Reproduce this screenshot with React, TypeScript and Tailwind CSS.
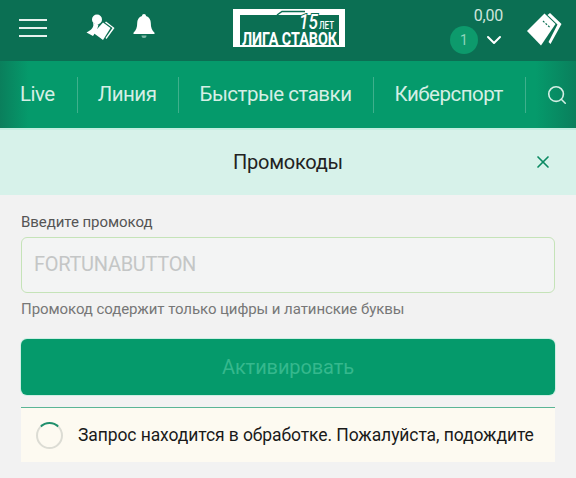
import { X, Search, ChevronDown } from 'lucide-react';

const NAV_ITEMS = ['Live', 'Линия', 'Быстрые ставки', 'Киберспорт'];

function Logo() {
  return (
    <svg width="112" height="38" viewBox="0 0 112 38" className="shrink-0 overflow-visible">
      <rect width="112" height="38" fill="#fff" />
      <path d="M7 6H106V36H7Z" fill="#0b6f53" />
      <path d="M44 6 49 2.500H72" fill="none" stroke="#0b6f53" strokeWidth="1.500" />
      <path d="M86 0H112V4H106V6H86Z" fill="#fff" />
      <text x="66" y="20" fontFamily="Roboto, sans-serif" fontStyle="italic" fontWeight="500" fontSize="21" fill="#fff" stroke="#0b6f53" strokeWidth="2" paintOrder="stroke" textLength="19" lengthAdjust="spacingAndGlyphs">15</text>
      <text x="86" y="20" fontFamily="Roboto, sans-serif" fontWeight="500" fontSize="11" fill="#fff" textLength="15" lengthAdjust="spacingAndGlyphs">ЛЕТ</text>
      <text x="9" y="36" fontFamily="Roboto, sans-serif" fontWeight="700" fontSize="18" fill="#fff" textLength="95" lengthAdjust="spacingAndGlyphs">ЛИГА СТАВОК</text>
    </svg>
  );
}

function CouponIcon() {
  return (
    <svg width="36" height="34" viewBox="0 0 36 34" className="shrink-0">
      <path d="M24 1 35.500 12 24.500 32 22.500 30 31.500 12.500 21.500 3Z" fill="#fff" />
      <path d="M18.500 1.500 29.500 12 15 33.500 1 19Z" fill="#fff" />
      <path d="M17 9 24.500 16" stroke="#0b6f53" strokeWidth="1.200" strokeDasharray="2 1.500" />
    </svg>
  );
}

function PromoIcon() {
  return (
    <svg width="30" height="30" viewBox="0 0 30 30" className="shrink-0">
      <circle cx="12" cy="6.500" r="5" fill="#fff" />
      <path d="M8 10c1.500 4-1.500 7-6.500 9.500L8 23l4-6 1.500-5.500Z" fill="#fff" />
      <path d="M18 9.500 25.500 15 18 27 8.500 20Z" fill="#fff" />
      <path d="M21 8.500 29.500 15 21.500 26 20.500 25 27.500 15 20 9.500Z" fill="#fff" />
    </svg>
  );
}

function BellIcon() {
  return (
    <svg width="22" height="26" viewBox="0 0 22 26" className="shrink-0">
      <path d="M11 0c1.200 0 2 .9 2 2.100 3.300 1 4.800 3.700 4.800 7 0 4.500 1 7.200 3.700 9.600v1.300H.5v-1.300c2.700-2.400 3.700-5.100 3.700-9.600 0-3.300 1.500-6 4.800-7C9 .9 9.800 0 11 0Z" fill="#fff" />
      <path d="M8.500 21.500h5a2.500 2.500 0 0 1-5 0Z" fill="#7fb8a6" />
    </svg>
  );
}

export default function App() {
  return (
    <div className="w-[576px] h-[478px] overflow-hidden bg-[#f2f2f2] font-['Roboto',sans-serif]">
      {/* Header */}
      <header className="h-[61px] flex items-center bg-[#0b6f53] pl-[19px] pr-[14px]">
        <div className="w-[28px] flex flex-col gap-[6px] mb-[5px]">
          <span className="h-[2px] bg-[#e6f2ee]" />
          <span className="h-[2px] bg-[#e6f2ee]" />
          <span className="h-[2px] bg-[#e6f2ee]" />
        </div>
        <div className="ml-[38px] mb-[5px]">
          <PromoIcon />
        </div>
        <div className="ml-[18px] mb-[8px]">
          <BellIcon />
        </div>
        <div className="ml-[78px] mb-[5px]">
          <Logo />
        </div>
        <div className="ml-auto flex flex-col items-end mr-[21px]">
          <span className="text-[16px] leading-[18px] text-[#cfe5dd] mr-[2px] tracking-[-0.2px]">0,00</span>
          <div className="flex items-center gap-[4px] mt-[1px] -mr-[1px]">
            <span className="w-[28px] h-[28px] rounded-full bg-[#0d9a6c] flex items-center justify-center text-[14px] text-[#8fd5bb]">1</span>
            <ChevronDown size={24} color="#fff" strokeWidth={2} />
          </div>
        </div>
        <div className="mb-[3px]">
          <CouponIcon />
        </div>
      </header>

      {/* Nav */}
      <nav className="h-[67px] flex items-center pl-[20px] bg-[linear-gradient(90deg,#0a7f5c_0%,#059a6b_5%,#059a6b_93%,#0a7f5c_100%)]">
        {NAV_ITEMS.map((item) => (
          <div key={item} className="flex items-center">
            <span className="text-[20.500px] tracking-[-0.5px] text-[#d5efe5] whitespace-nowrap">{item}</span>
            <span className="w-px h-[36px] bg-[#3fb08c] ml-[22px] mr-[20px]" />
          </div>
        ))}
        <Search size={22} color="#d5efe5" strokeWidth={1.75} />
      </nav>
      <div className="h-[2px] bg-[#c2eee0]" />

      {/* Title */}
      <div className="h-[65px] flex items-center justify-center relative bg-[#d7f2ea]">
        <span className="text-[20px] tracking-[-0.25px] text-[#222] mb-[2px]">Промокоды</span>
        <X size={20} color="#0b8a62" strokeWidth={2} className="absolute right-[23px] top-[22px]" />
      </div>

      {/* Form */}
      <div className="px-[21px] pt-[17px]">
        <label className="block text-[15px] tracking-[-0.05px] leading-[20px] text-[#555]">Введите промокод</label>
        <div className="mt-[5px] h-[56px] flex items-center px-[12px] pb-[2px] rounded-[6px] border border-[#c5e3b8] bg-[#f3f4f4]">
          <span className="text-[20px] text-[#c4c6c6] tracking-[-0.3px]">FORTUNABUTTON</span>
        </div>
        <p className="mt-[6px] text-[15px] tracking-[-0.07px] leading-[20px] text-[#777]">Промокод содержит только цифры и латинские буквы</p>
        <button type="button" className="mt-[20px] w-full h-[56px] rounded-[6px] bg-[#059a6b] ring-1 ring-[#cdeee3] text-[20px] tracking-[-0.1px] text-[#35b88d]">Активировать</button>
        <div className="mt-[12px] h-[55px] flex items-center border-t border-[#5ab596] bg-[#fdfaf1] pl-[15px]">
          <span className="w-[27px] h-[27px] rounded-full border-2 border-[#dcdcd4] border-t-[#1f8f6c]" />
          <span className="ml-[15px] text-[17.500px] tracking-[-0.09px] text-[#1a1a1a] whitespace-nowrap">Запрос находится в обработке. Пожалуйста, подождите</span>
        </div>
      </div>
    </div>
  );
}
